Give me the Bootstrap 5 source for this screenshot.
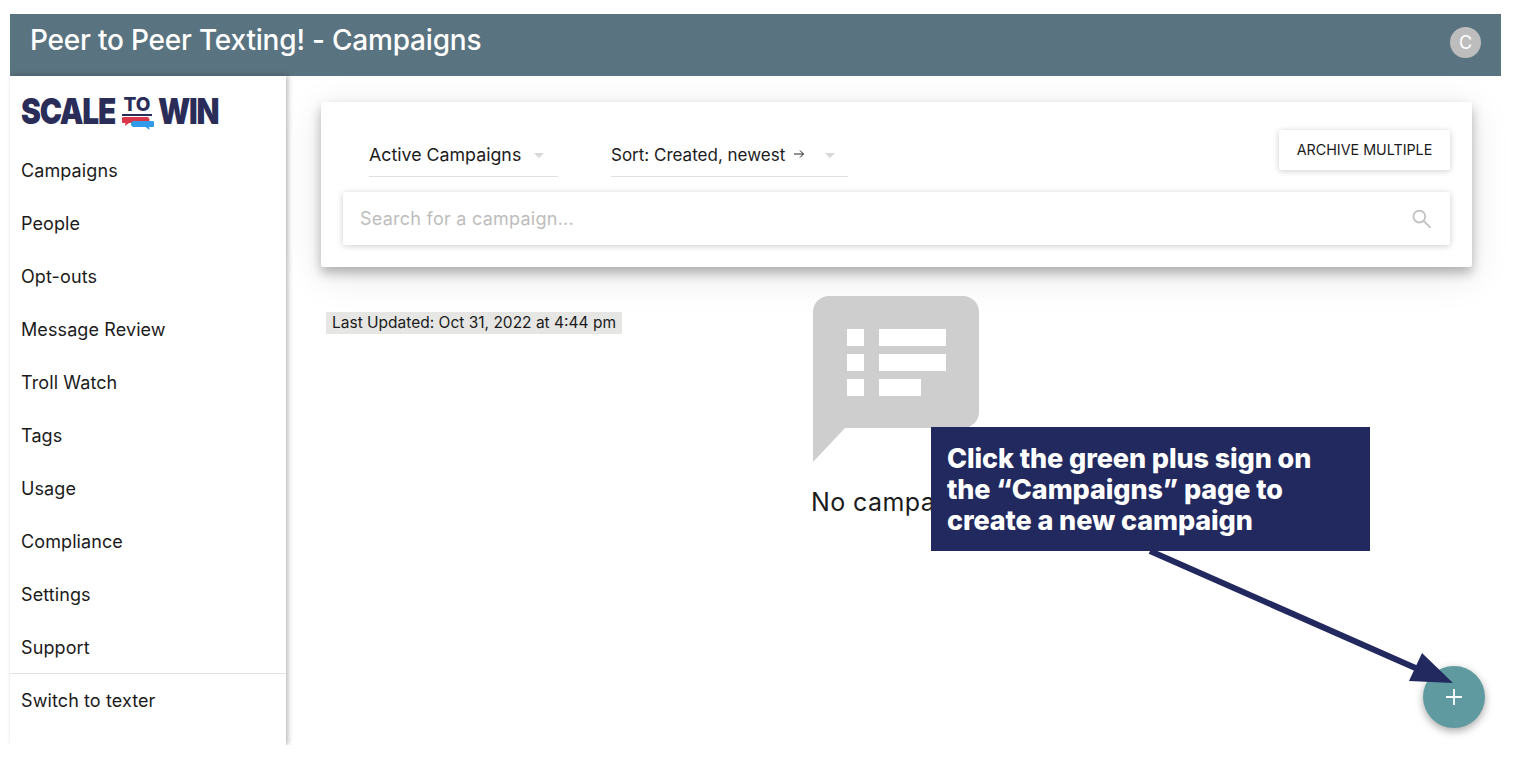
<!DOCTYPE html>
<html lang="en">
<head>
  <meta charset="UTF-8" />
  <meta name="viewport" content="width=device-width, initial-scale=1.0"/>
  <title>Peer to Peer Texting! - Campaigns</title>
  <link rel="stylesheet" href="https://cdn.jsdelivr.net/npm/bootstrap@5.3.0/dist/css/bootstrap.min.css">
  <style>
    body {
      background: #fff;
      font-family: Inter, "Open Sans", sans-serif;
      color: #111;
      overflow: hidden;
    }
    .app-frame {
      position: relative;
      width: 1491px;
      height: 731px;
      margin: 14px 0 0 10px;
    }
    .app-bar {
      height: 62px;
      background: #5a7380;
      color: #fff;
      padding: 0 20px 6px 20px;
    }
    .app-title { font-size: 28px; font-weight: 500; letter-spacing: -.2px; margin-top: -4px; }
    .avatar-dot {
      width: 31px;
      height: 31px;
      background: #bdbdbd;
      font-size: 18px;
    }
    .app-body { height: 669px; }
    .side-col {
      width: 276px;
      flex: none;
      box-shadow: 2px 0 5px rgba(0,0,0,.28);
      z-index: 2;
    }
    .brand-row { height: 68px; padding: 17px 0 0 11px; }
    .brand-name {
      font-weight: 900;
      font-size: 36px;
      line-height: 36px;
      letter-spacing: -1.5px;
      color: #2b2d59;
    }
    .brand-word { display: block; flex: none; transform: scaleX(.83); transform-origin: left top; white-space: nowrap; }
    .brand-to { position: relative; width: 30px; height: 36px; margin: 0 6px 0 7px; flex: none; }
    .brand-to span {
      display: block;
      height: 23px;
      padding-top: 4px;
      text-align: center;
      font-size: 19px;
      line-height: 16px;
      font-weight: 800;
      letter-spacing: 0;
      border-bottom: 2px solid #2b2d59;
    }
    .brand-to svg { position: absolute; left: 0; top: 24px; }
    .side-link {
      display: block;
      height: 53px;
      line-height: 53px;
      padding-left: 11px;
      font-size: 18px;
      letter-spacing: .1px;
      color: #1b1b1b;
      text-decoration: none;
    }
    .side-rule { border-top: 1px solid #e2e2e2; margin-top: -1px; }
    .main-col { flex: 1; min-width: 0; position: relative; }
    .filter-card {
      position: absolute;
      left: 35px;
      top: 26px;
      width: 1151px;
      height: 165px;
      border: 0;
      border-radius: 2px;
      box-shadow: 0 6px 12px rgba(0,0,0,.28), 0 8px 40px rgba(0,0,0,.1);
      padding: 28px 22px 22px 22px;
    }
    .pick-box {
      height: 47px;
      padding-top: 5px;
      border-bottom: 1px solid #e0e0e0;
      font-size: 17.8px;
      color: #1b1b1b;
      white-space: nowrap;
    }
    .pick-sort { font-size: 17px; }
    .caret-mark {
      width: 0; height: 0;
      border-left: 5px solid transparent;
      border-right: 5px solid transparent;
      border-top: 5px solid #d8d8d8;
    }
    .archive-btn {
      width: 171px;
      height: 40px;
      padding: 0;
      border: 0;
      border-radius: 2px;
      background: #fff;
      font-size: 14.3px;
      color: #1b1b1b;
      box-shadow: 0 1px 6px rgba(0,0,0,.2);
    }
    .search-row {
      height: 53px;
      margin-top: 15px;
      border-radius: 2px;
      box-shadow: 0 1px 6px rgba(0,0,0,.2);
      padding: 0 17px 0 17px;
    }
    .search-input {
      border: 0;
      padding: 0;
      font-size: 18px;
      background: transparent;
      letter-spacing: .25px;
    }
    .search-input::placeholder { color: #bdbdbd; }
    .search-input:focus { box-shadow: none; }
    .updated-tag {
      position: absolute;
      left: 40px;
      top: 236px;
      height: 22px;
      padding: 0 6px;
      line-height: 22px;
      background: #e6e6e4;
      font-size: 15.5px;
      color: #1b1b1b;
      white-space: nowrap;
    }
    .empty-state {
      position: absolute;
      left: 527px;
      top: 220px;
      width: 170px;
    }
    .empty-state svg { display: block; }
    .empty-text {
      width: 120px;
      overflow: hidden;
      font-size: 25px;
      letter-spacing: .4px;
      line-height: 30px;
      margin: 25px 0 0 -2px;
      white-space: nowrap;
      color: #1b1b1b;
    }
    .fab-add {
      position: absolute;
      left: 1413px;
      top: 652px;
      width: 62px;
      height: 62px;
      background: #5e9a9f;
      box-shadow: 0 3px 8px rgba(0,0,0,.35);
      z-index: 3;
    }
    .note-box {
      position: absolute;
      left: 921px;
      top: 413px;
      width: 439px;
      height: 124px;
      padding: 16px 16px;
      background: #22295e;
      color: #fff;
      font-size: 27px;
      line-height: 31px;
      font-weight: 800;
      letter-spacing: -.1px;
      z-index: 4;
    }
    .note-arrow { position: absolute; left: 0; top: 0; z-index: 5; pointer-events: none; }
  </style>
</head>
<body>
  <div class="app-frame">
    <header class="app-bar d-flex align-items-center justify-content-between">
      <div class="app-title">Peer to Peer Texting! - Campaigns</div>
      <div class="avatar-dot rounded-circle d-flex align-items-center justify-content-center">C</div>
    </header>

    <div class="app-body d-flex">
      <aside class="side-col bg-white">
        <div class="brand-row">
          <div class="brand-name d-flex">
            <span class="brand-word" style="width:94px">SCALE</span>
            <div class="brand-to">
              <span>TO</span>
              <svg width="32" height="13" viewBox="0 0 32 13">
                <path d="M2 0h22a2.500 2.500 0 0 1 1 6H7l-4 3 .5-3H2a3 3 0 0 1 0-6z" fill="#d9364a"/>
                <path d="M12 4h18a2.500 2.500 0 0 1 0 6h-3l.5 3-4-3H12a3 3 0 0 1 0-6z" fill="#2f9bea"/>
              </svg>
            </div>
            <span class="brand-word" style="width:62px">WIN</span>
          </div>
        </div>
        <nav>
          <a class="side-link" href="#">Campaigns</a>
          <a class="side-link" href="#">People</a>
          <a class="side-link" href="#">Opt-outs</a>
          <a class="side-link" href="#">Message Review</a>
          <a class="side-link" href="#">Troll Watch</a>
          <a class="side-link" href="#">Tags</a>
          <a class="side-link" href="#">Usage</a>
          <a class="side-link" href="#">Compliance</a>
          <a class="side-link" href="#">Settings</a>
          <a class="side-link" href="#">Support</a>
          <div class="side-rule"></div>
          <a class="side-link" href="#">Switch to texter</a>
        </nav>
      </aside>

      <main class="main-col">
        <div class="card filter-card">
          <div class="d-flex align-items-start justify-content-between">
            <div class="d-flex" style="padding-left:26px">
              <div class="pick-box d-flex align-items-center" style="width:189px">
                <span>Active Campaigns</span><i class="caret-mark" style="margin-left:13px"></i>
              </div>
              <div class="pick-box pick-sort d-flex align-items-center" style="width:237px;margin-left:53px">
                <span>Sort: Created, newest</span>
                <svg class="ms-2 mb-1" width="12" height="10" viewBox="0 0 12 10"><path d="M1 5h9.500M7 1.500L10.500 5 7 8.500" fill="none" stroke="#222" stroke-width="1"/></svg>
                <i class="caret-mark" style="margin-left:20px"></i>
              </div>
            </div>
            <button class="btn archive-btn">ARCHIVE MULTIPLE</button>
          </div>
          <div class="search-row d-flex align-items-center">
            <input class="form-control search-input" placeholder="Search for a campaign...">
            <svg width="22" height="22" viewBox="0 0 22 22"><circle cx="8.500" cy="8.500" r="6" fill="none" stroke="#c4c4c4" stroke-width="2"/><path d="M13 13l7 7" stroke="#c4c4c4" stroke-width="2"/></svg>
          </div>
        </div>

        <div class="updated-tag">Last Updated: Oct 31, 2022 at 4:44 pm</div>

        <div class="empty-state">
          <svg width="166" height="166" viewBox="0 0 166 166">
            <path d="M16 0h134a16 16 0 0 1 16 16v100a16 16 0 0 1-16 16H32L0 166V16A16 16 0 0 1 16 0z" fill="#cecece"/>
            <g fill="#fff">
              <rect x="34" y="33" width="17" height="17"/><rect x="66" y="33" width="67" height="17"/>
              <rect x="34" y="58" width="17" height="17"/><rect x="66" y="58" width="67" height="17"/>
              <rect x="34" y="83" width="17" height="17"/><rect x="66" y="83" width="42" height="17"/>
            </g>
          </svg>
          <div class="empty-text">No campaigns</div>
        </div>
      </main>
    </div>

    <div class="fab-add rounded-circle d-flex align-items-center justify-content-center">
      <svg width="18" height="18" viewBox="0 0 18 18"><path d="M9 1v16M1 9h16" stroke="#fff" stroke-width="1.800"/></svg>
    </div>

    <div class="note-box">Click the green plus sign on<br>the “Campaigns” page to<br>create a new campaign</div>

    <svg class="note-arrow" width="1491" height="731" viewBox="0 0 1491 731">
      <path d="M1140 537L1410 656" stroke="#22295e" stroke-width="6"/>
      <path d="M1412 639L1399 667L1443 669z" fill="#22295e"/>
    </svg>
  </div>
  <script src="https://cdn.jsdelivr.net/npm/bootstrap@5.3.0/dist/js/bootstrap.bundle.min.js"></script>
</body>
</html>
